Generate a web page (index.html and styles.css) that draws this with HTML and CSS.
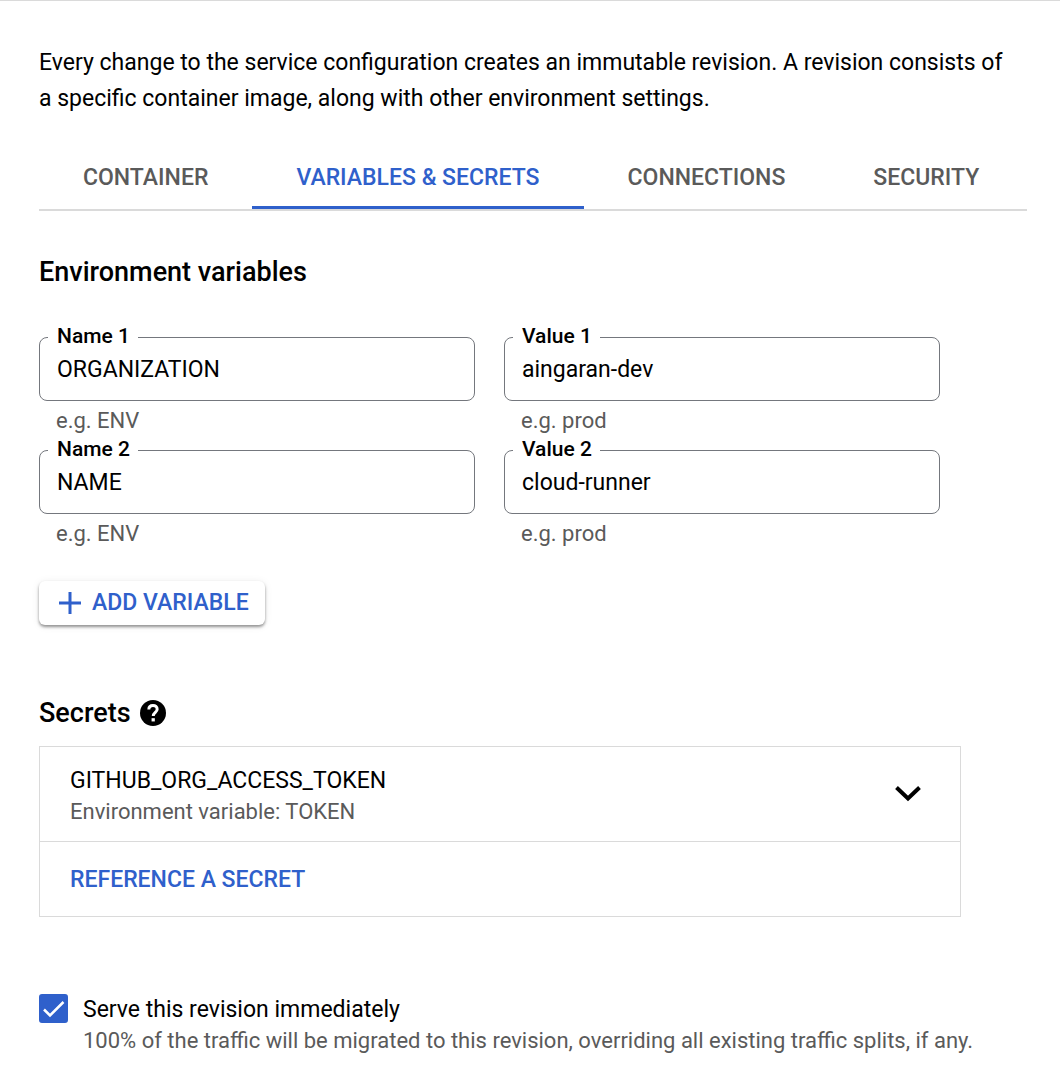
FILE: index.html
```html
<!DOCTYPE html>
<html lang="en">
<head>
<meta charset="utf-8">
<meta name="viewport" content="width=device-width, initial-scale=1">
<title>Service configuration</title>
<link rel="stylesheet" href="styles.css">
</head>
<body>
<main class="page">
  <p class="intro">Every change to the service configuration creates an immutable revision. A revision consists of a specific container image, along with other environment settings.</p>

  <div class="tabs" role="tablist">
    <button class="tab" type="button" role="tab" aria-selected="false">CONTAINER</button>
    <button class="tab tab-active" type="button" role="tab" aria-selected="true">VARIABLES &amp; SECRETS</button>
    <button class="tab" type="button" role="tab" aria-selected="false">CONNECTIONS</button>
    <button class="tab" type="button" role="tab" aria-selected="false">SECURITY</button>
  </div>

  <section class="variables">
    <h2 class="heading">Environment variables</h2>
    <div class="fields">
      <div class="field">
        <label class="field-label" for="name-1">Name 1</label>
        <input class="field-input" id="name-1" type="text" value="ORGANIZATION">
        <span class="field-hint">e.g. ENV</span>
      </div>
      <div class="field">
        <label class="field-label" for="value-1">Value 1</label>
        <input class="field-input" id="value-1" type="text" value="aingaran-dev">
        <span class="field-hint">e.g. prod</span>
      </div>
      <div class="field">
        <label class="field-label" for="name-2">Name 2</label>
        <input class="field-input" id="name-2" type="text" value="NAME">
        <span class="field-hint">e.g. ENV</span>
      </div>
      <div class="field">
        <label class="field-label" for="value-2">Value 2</label>
        <input class="field-input" id="value-2" type="text" value="cloud-runner">
        <span class="field-hint">e.g. prod</span>
      </div>
    </div>
    <button class="add-button" type="button">
      <svg class="add-icon" viewBox="0 0 22 22" aria-hidden="true"><path d="M11 0v22M0 11h22" fill="none" stroke="currentColor" stroke-width="3"/></svg>
      ADD VARIABLE
    </button>
  </section>

  <section class="secrets">
    <h2 class="heading heading-help">Secrets
      <svg class="help-icon" viewBox="2 2 20 20" role="img" aria-label="Help"><circle cx="12" cy="12" r="10" fill="currentColor"/><path d="M8.800 9.300C8.800 7.300 10.200 6.200 12 6.200s3.200 1.100 3.200 2.900c0 2.300-3 2.500-3 5.200" fill="none" stroke="#fff" stroke-width="2.300"/><path d="M10.900 16h2.500v2.500h-2.500z" fill="#fff"/></svg>
    </h2>
    <div class="secret-list">
      <button class="secret" type="button" aria-expanded="false">
        <span class="secret-text">
          <span class="secret-name">GITHUB_ORG_ACCESS_TOKEN</span>
          <span class="secret-detail">Environment variable: TOKEN</span>
        </span>
        <svg class="chevron" viewBox="0 0 26 16" aria-hidden="true"><path d="M1.500 1.500 13 12.500 24.500 1.500" fill="none" stroke="currentColor" stroke-width="4"/></svg>
      </button>
      <div class="secret-footer">
        <button class="link-button" type="button">REFERENCE A SECRET</button>
      </div>
    </div>
  </section>

  <div class="serve">
    <span class="checkbox">
      <input class="checkbox-input" id="serve-now" type="checkbox" checked aria-describedby="serve-note">
      <svg class="checkbox-mark" viewBox="0 0 29 29" aria-hidden="true"><path d="M5 15.500 11 21.500 24.500 8" fill="none" stroke="currentColor" stroke-width="2.500"/></svg>
    </span>
    <div class="serve-text">
      <label class="serve-label" for="serve-now">Serve this revision immediately</label>
      <span class="serve-note" id="serve-note">100% of the traffic will be migrated to this revision, overriding all existing traffic splits, if any.</span>
    </div>
  </div>
</main>
</body>
</html>
```
FILE: styles.css
```css
:root {
  --blue: #2f60cb;
  --gray: #5a5a5a;
  --line: #dadada;
  --outline: #74777d;
}

* {
  box-sizing: border-box;
}

body {
  margin: 0;
  background: #fff;
  color: #000;
  font: 400 23px/32px Roboto, sans-serif;
}

button,
input {
  margin: 0;
  padding: 0;
  border: 0;
  background: none;
  color: inherit;
  font: inherit;
}

.page {
  padding: 44px 33px 24px 39px;
  border-top: 1px solid var(--line);
}

.intro {
  margin: 0;
  padding-right: 16px;
  line-height: 36px;
}

.tabs {
  display: flex;
  margin-top: 28px;
  border-bottom: 2px solid var(--line);
}

.tab {
  padding: 17px 44px 12px;
  border-bottom: 3px solid transparent;
  color: var(--gray);
  font-weight: 500;
  white-space: nowrap;
}

.tab-active {
  border-color: var(--blue);
  color: var(--blue);
}

.heading {
  margin: 0;
  font-size: 27px;
  font-weight: 500;
  line-height: 32px;
}

.variables {
  margin-top: 45px;
  padding-right: 87px;
}

.fields {
  display: grid;
  grid-template-columns: 1fr 1fr;
  gap: 13px 29px;
  margin-top: 49px;
}

.field {
  position: relative;
  display: flex;
  flex-direction: column;
}

.field-label {
  position: absolute;
  top: -13px;
  left: 9px;
  padding: 0 8px 0 9px;
  background: #fff;
  font-size: 21px;
  font-weight: 500;
  line-height: 24px;
}

.field-input {
  width: 100%;
  height: 64px;
  padding: 0 17px;
  border: 1px solid var(--outline);
  border-radius: 8px;
}

.field-hint {
  padding: 6px 17px 2px;
  color: var(--gray);
  font-size: 22px;
  line-height: 28px;
}

.add-button {
  display: flex;
  align-items: center;
  gap: 11px;
  margin-top: 31px;
  padding: 6px 16px 6px 20px;
  border-radius: 6px;
  box-shadow: 0 2px 3px rgba(0, 0, 0, 0.4), 0 1px 8px rgba(0, 0, 0, 0.08);
  color: var(--blue);
  font-weight: 500;
}

.add-icon {
  width: 22px;
  height: 22px;
}

.secrets {
  margin-top: 72px;
  padding-right: 66px;
}

.heading-help {
  display: flex;
  align-items: center;
  gap: 9px;
}

.help-icon {
  width: 26px;
  height: 26px;
}

.secret-list {
  margin-top: 17px;
  border: 1px solid var(--line);
}

.secret {
  display: flex;
  align-items: center;
  justify-content: space-between;
  width: 100%;
  padding: 0 39px 0 30px;
  text-align: left;
}

.secret-text,
.serve-text {
  display: flex;
  flex-direction: column;
}

.secret-text {
  padding: 18px 0 14px;
}

.secret-detail,
.serve-note {
  color: var(--gray);
  font-size: 22px;
  line-height: 30px;
}

.chevron {
  width: 26px;
  height: 16px;
}

.secret-footer {
  padding: 22px 30px 20px;
  border-top: 1px solid var(--line);
}

.link-button {
  display: block;
  color: var(--blue);
  font-weight: 500;
}

.serve {
  display: flex;
  gap: 15px;
  margin-top: 76px;
}

.serve-text {
  padding-top: 1px;
}

.checkbox {
  display: grid;
  width: 29px;
  height: 29px;
  margin-top: 1px;
}

.checkbox-input,
.checkbox-mark {
  grid-area: 1 / 1;
  width: 29px;
  height: 29px;
}

.checkbox-input {
  appearance: none;
  border: 2px solid var(--gray);
  border-radius: 3px;
}

.checkbox-input:checked {
  border-color: var(--blue);
  background: var(--blue);
}

.checkbox-mark {
  color: #fff;
  pointer-events: none;
  visibility: hidden;
}

.checkbox-input:checked + .checkbox-mark {
  visibility: visible;
}
```
